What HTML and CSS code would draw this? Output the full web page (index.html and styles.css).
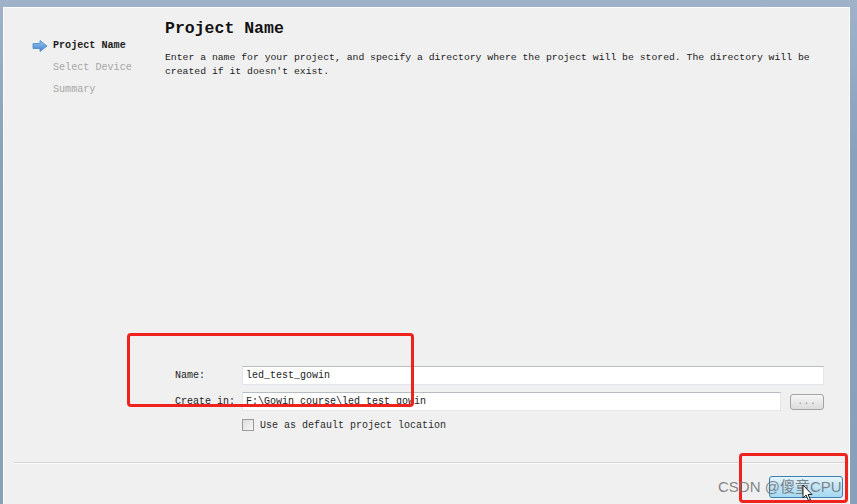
FILE: index.html
```html
<!DOCTYPE html>
<html>
<head>
<meta charset="utf-8">
<link rel="stylesheet" href="styles.css">
</head>
<body>
<div class="window">
  <div class="panel">
    <div class="content">
      <nav class="sidebar">
        <div class="nav-item active">
          <svg class="arrow" width="16" height="12" viewBox="0 0 16 12">
            <defs>
              <linearGradient id="ag" x1="0" y1="0" x2="0" y2="1">
                <stop offset="0" stop-color="#9cc6f0"/>
                <stop offset="1" stop-color="#3d82d0"/>
              </linearGradient>
            </defs>
            <path d="M1 3.5 H8 V0.5 L15 6 L8 11.5 V8.5 H1 Z" fill="url(#ag)" stroke="#4a86c8" stroke-width="0.8" stroke-linejoin="round"/>
          </svg>
          <span>Project Name</span>
        </div>
        <div class="nav-item">Select Device</div>
        <div class="nav-item">Summary</div>
      </nav>
      <main class="main">
        <h1 class="title">Project Name</h1>
        <p class="desc">Enter a name for your project, and specify a directory where the project will be stored. The directory will be created if it doesn't exist.</p>
        <div class="form">
          <label class="label">Name:</label>
          <div class="input wide">led_test_gowin</div>
          <label class="label">Create in:</label>
          <div class="input">F:\Gowin course\led_test_gowin</div>
          <button class="browse">...</button>
          <div class="check-row">
            <span class="checkbox"></span>
            <span>Use as default project location</span>
          </div>
        </div>
      </main>
    </div>
    <div class="separator"></div>
    <div class="footer">
      <button class="next" aria-label="Next"></button>
    </div>
  </div>
  <div class="mark mark-form"></div>
  <div class="mark mark-next"></div>
  <div class="watermark">CSDN @傻童CPU</div>
  <svg class="cursor" width="12" height="18" viewBox="0 0 12 18">
    <path d="M1 1 V14 L4 11 L6.5 16.5 L8.5 15.5 L6 10.5 H10 Z" fill="#fff" stroke="#222" stroke-width="1" stroke-linejoin="round"/>
  </svg>
</div>
</body>
</html>
```
FILE: styles.css
```css
* { box-sizing: border-box; }
html, body { margin: 0; padding: 0; }
body {
  width: 857px;
  height: 504px;
  overflow: hidden;
  background: #8ea3ba;
  font-family: "Liberation Mono", "DejaVu Sans Mono", monospace;
  color: #1c1c1c;
}
.window {
  position: relative;
  width: 857px;
  height: 504px;
  padding: 7px 7px 0 3px;
  background: linear-gradient(#9fb2c8, #8ba1ba 30%, #8aa0b9);
}
.panel {
  height: 497px;
  background: #f0f0f0;
  border-top: 1px solid #fbfbfb;
  border-left: 1px solid #fbfbfb;
  border-right: 1px solid #fbfbfb;
  display: flex;
  flex-direction: column;
}
.content {
  height: 454px;
  display: flex;
}
.sidebar {
  width: 161px;
  padding: 27px 0 0 28px;
  flex: none;
}
.nav-item {
  height: 22px;
  line-height: 22px;
  font-size: 10.1px;
  padding-left: 21px;
  color: #a6a6a6;
  white-space: nowrap;
}
.nav-item.active {
  padding-left: 0;
  color: #1c1c1c;
  font-weight: bold;
  display: flex;
  align-items: center;
  gap: 5px;
}
.arrow { flex: none; }
.main {
  flex: 1;
  display: flex;
  flex-direction: column;
  padding: 10px 0 31px 0;
  min-width: 0;
}
.title {
  margin: 0;
  font-size: 16.5px;
  line-height: 22px;
  font-weight: bold;
  color: #111;
}
.desc {
  margin: 11px 0 0;
  width: 680px;
  font-size: 9.77px;
  line-height: 14px;
  color: #1c1c1c;
}
.form {
  margin-top: auto;
  margin-left: 10px;
  margin-right: 25px;
  display: grid;
  grid-template-columns: 58px 1fr 34px;
  column-gap: 9px;
  row-gap: 7px;
  align-items: center;
  font-size: 10px;
}
.label {
  color: #1c1c1c;
  white-space: nowrap;
}
.input {
  height: 19px;
  line-height: 17px;
  padding-left: 3px;
  background: #fff;
  border: 1px solid #e2e6ea;
  border-top-color: #b6bcc4;
  white-space: nowrap;
  overflow: hidden;
}
.input.wide { grid-column: 2 / 4; }
.browse {
  height: 16px;
  padding: 0;
  font-family: inherit;
  font-size: 9px;
  letter-spacing: 1px;
  color: #888;
  background: linear-gradient(#f6f6f6, #dcdcdc);
  border: 1px solid #a4a4a4;
  border-radius: 3px;
}
.check-row {
  grid-column: 2 / 4;
  display: flex;
  align-items: center;
  gap: 6px;
  margin-top: 1px;
  color: #2a2a2a;
}
.checkbox {
  width: 12px;
  height: 12px;
  border: 1px solid #9a9a9a;
  background: linear-gradient(135deg, #dcdcdc, #f8f8f8);
}
.separator {
  height: 2px;
  margin-left: 10px;
  background: #d3d3d3;
  border-bottom: 1px solid #fafafa;
  flex: none;
}
.footer {
  flex: 1;
  display: flex;
  justify-content: flex-end;
  align-items: flex-start;
  padding: 12px 6px 0 0;
}
.next {
  width: 74px;
  height: 22px;
  padding: 0;
  background: linear-gradient(#e6f5fd, #bfe4f8 50%, #a7d8f2);
  border: 1px solid #3c7fb1;
  border-radius: 3px;
}
.mark {
  position: absolute;
  border: 3px solid #f0221e;
  border-radius: 4px;
}
.mark-form {
  left: 127px;
  top: 333px;
  width: 287px;
  height: 74px;
}
.mark-next {
  left: 739px;
  top: 453px;
  width: 109px;
  height: 50px;
}
.watermark {
  position: absolute;
  left: 718px;
  top: 477px;
  font-family: "Liberation Sans", "Noto Sans CJK SC", sans-serif;
  font-size: 15px;
  line-height: 20px;
  color: rgba(110, 110, 110, 0.85);
  white-space: nowrap;
}
.cursor {
  position: absolute;
  left: 802px;
  top: 484px;
}
```
